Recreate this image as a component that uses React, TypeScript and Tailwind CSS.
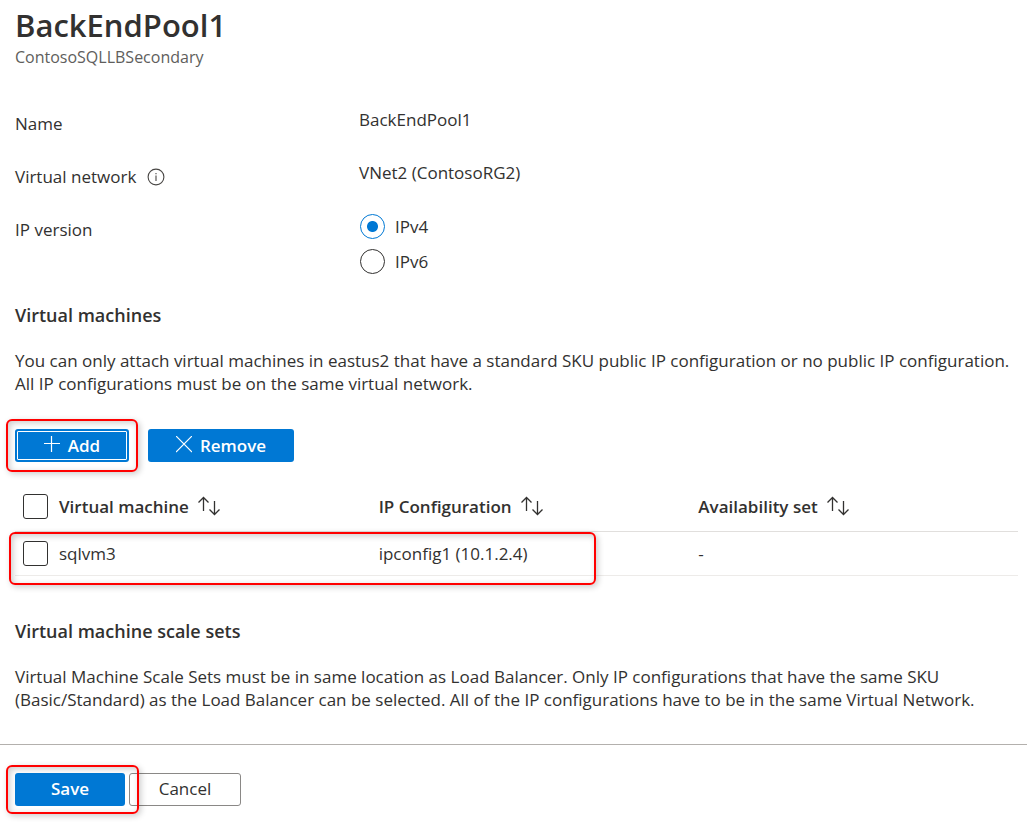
import type { ReactNode } from "react";

function SortIcon() {
  return (
    <svg width="24" height="20" viewBox="0 0 24 20" fill="none" stroke="#323130" strokeWidth="1.3" aria-hidden="true">
      <path d="M6.500 15V1.500M1.500 6.500l5-5 5 5M17.500 5v13.500M12.500 13.500l5 5 5-5" />
    </svg>
  );
}

function InfoIcon() {
  return (
    <svg width="18" height="18" viewBox="0 0 18 18" fill="none" stroke="#484644" strokeWidth="1.1" role="img" aria-label="Information">
      <circle cx="9" cy="9" r="7.900" />
      <path d="M9 7.500v5.500M9 5v1.300" />
    </svg>
  );
}

function Highlight({ className }: { className: string }) {
  return (
    <span
      aria-hidden="true"
      className={`pointer-events-none absolute rounded-md border-2 border-[#ff0000] shadow-[2px_2px_6px_rgba(0,0,0,0.2),inset_2px_2px_6px_rgba(0,0,0,0.2)] ${className}`}
    />
  );
}

function Field({ label, children }: { label: ReactNode; children: ReactNode }) {
  return (
    <div className="grid grid-cols-[344px_1fr] items-start">
      <div className="flex items-center gap-[11px] pt-1">{label}</div>
      <div>{children}</div>
    </div>
  );
}

function IpOption({ label, checked }: { label: string; checked?: boolean }) {
  return (
    <label className="flex h-[25px] items-center gap-[10px]">
      <input
        type="radio"
        name="ip-version"
        defaultChecked={checked}
        className="ml-px size-[25px] appearance-none rounded-full border border-[#323130] bg-white checked:border-[#0078d4] checked:bg-[radial-gradient(circle,#0078d4_5px,transparent_6px)]"
      />
      {label}
    </label>
  );
}

function RowCheckbox({ label }: { label: string }) {
  return (
    <input
      type="checkbox"
      aria-label={label}
      className="ml-2 block size-[25px] appearance-none rounded-[3px] border border-[#323130] bg-white checked:bg-[#0078d4]"
    />
  );
}

function SortHeader({ children }: { children: ReactNode }) {
  return (
    <th scope="col" className="p-0 text-left font-semibold">
      <button type="button" className="flex items-center gap-2">
        {children}
        <SortIcon />
      </button>
    </th>
  );
}

export default function App() {
  return (
    <main className="bg-white font-['Open_Sans','Noto_Sans',sans-serif] text-[17px] leading-[23px] text-[#323130]">
      <div className="pr-[9px] pl-[15px]">
        <header className="pt-1">
          <h1 className="text-[31px] leading-[42px] font-semibold">BackEndPool1</h1>
          <p className="text-base leading-[23px] text-[#605e5c]">ContosoSQLLBSecondary</p>
        </header>

        <div className="flex flex-col gap-[26px] pt-[39px]">
          <Field label="Name">BackEndPool1</Field>
          <Field
            label={
              <>
                Virtual network
                <InfoIcon />
              </>
            }
          >
            VNet2 (ContosoRG2)
          </Field>
          <Field label="IP version">
            <div role="radiogroup" aria-label="IP version" className="flex flex-col gap-[10px]">
              <IpOption label="IPv4" checked />
              <IpOption label="IPv6" />
            </div>
          </Field>
        </div>

        <section className="pt-[30px]">
          <h2 className="text-lg leading-[23px] font-semibold">Virtual machines</h2>
          <p className="pt-[22px]">
            You can only attach virtual machines in eastus2 that have a standard SKU public IP configuration or no
            public IP configuration. All IP configurations must be on the same virtual network.
          </p>

          <div className="flex gap-[19px] pt-[34px]">
            <div className="relative">
              <button
                type="button"
                className="flex h-[33px] w-[114px] items-center justify-center gap-2 rounded-[3px] bg-[#0078d4] pb-px font-semibold text-white outline outline-offset-[-3px] outline-white"
              >
                <svg width="16" height="18" viewBox="0 0 16 18" stroke="currentColor" strokeWidth="1.200" aria-hidden="true">
                  <path d="M7.500 0v16M0 7.500h16" />
                </svg>
                Add
              </button>
              <Highlight className="-inset-x-[9px] -inset-y-[10px]" />
            </div>
            <button
              type="button"
              className="flex h-[33px] w-[146px] items-center justify-center gap-2 rounded-[3px] bg-[#0078d4] pb-px font-semibold text-white"
            >
              <svg width="16" height="18" viewBox="0 0 16 18" stroke="currentColor" strokeWidth="1.200" aria-hidden="true">
                <path d="M0 0l16 16M16 0L0 16" />
              </svg>
              Remove
            </button>
          </div>

          <div className="relative mt-5">
            <table className="w-full table-fixed border-collapse">
              <colgroup>
                <col className="w-11" />
                <col />
                <col />
                <col />
              </colgroup>
              <thead>
                <tr className="h-[49px] border-b border-[#e1dfdd]">
                  <th scope="col" className="p-0">
                    <RowCheckbox label="Select all virtual machines" />
                  </th>
                  <SortHeader>Virtual machine</SortHeader>
                  <SortHeader>IP Configuration</SortHeader>
                  <SortHeader>Availability set</SortHeader>
                </tr>
              </thead>
              <tbody>
                <tr className="h-11 border-b border-[#edebe9]">
                  <td className="p-0">
                    <RowCheckbox label="Select sqlvm3" />
                  </td>
                  <td className="p-0">sqlvm3</td>
                  <td className="p-0">ipconfig1 (10.1.2.4)</td>
                  <td className="p-0">-</td>
                </tr>
              </tbody>
            </table>
            <Highlight className="-bottom-[9px] -left-[6px] h-[53px] w-[587px]" />
          </div>
        </section>

        <section className="pt-11 pb-[33px]">
          <h2 className="text-lg leading-[23px] font-semibold">Virtual machine scale sets</h2>
          <p className="pt-[22px]">
            Virtual Machine Scale Sets must be in same location as Load Balancer. Only IP configurations that have the
            same SKU (Basic/Standard) as the Load Balancer can be selected. All of the IP configurations have to be in
            the same Virtual Network.
          </p>
        </section>
      </div>

      <footer className="flex gap-1 border-t border-[#b3b0ad] px-[15px] pt-7 pb-5">
        <div className="relative z-10">
          <button type="button" className="h-[33px] w-[110px] rounded-[3px] bg-[#0078d4] pb-px font-semibold text-white">
            Save
          </button>
          <Highlight className="-top-2 -right-[14px] -bottom-2 -left-[9px]" />
        </div>
        <button type="button" className="h-[33px] w-28 rounded-[3px] border border-[#8a8886] bg-white pb-px font-medium">
          Cancel
        </button>
      </footer>
    </main>
  );
}
